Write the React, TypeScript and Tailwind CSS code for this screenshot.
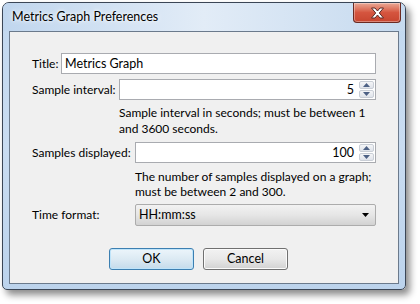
import React from "react";

const font = { fontFamily: '"Segoe UI", Lato, "Noto Sans", Arial, sans-serif' };

function Spinner() {
  return (
    <div className="flex h-full w-[16px] flex-col gap-[1px] py-[1px] pr-[1px]">
      {["up", "down"].map((d) => (
        <div
          key={d}
          className="flex flex-1 items-center justify-center rounded-[2px] border border-[#c9ced6] bg-gradient-to-b from-[#f4f5f7] to-[#dfe3ea]"
        >
          <svg width="7" height="4" viewBox="0 0 7 4">
            {d === "up" ? (
              <polygon points="0,4 7,4 3.5,0" fill="#4d6185" />
            ) : (
              <polygon points="0,0 7,0 3.5,4" fill="#4d6185" />
            )}
          </svg>
        </div>
      ))}
    </div>
  );
}

function NumberField({ value }: { value: string }) {
  return (
    <div className="flex h-[21px] flex-1 items-stretch border border-[#a9abb0] bg-white">
      <div className="flex flex-1 items-center justify-end pr-[5px] text-[12.5px] text-black">{value}</div>
      <Spinner />
    </div>
  );
}

export default function App() {
  return (
    <div className="h-[304px] w-[420px] overflow-hidden bg-white pl-[2px] pt-[2px]" style={font}>
      <div className="flex h-[288px] w-[404px] flex-col rounded-t-[7px] rounded-b-[5px] border border-[#3b4656] bg-gradient-to-b from-[#c2d8ef] via-[#c9dcf1] to-[#bcd3ec] shadow-[4px_5px_7px_rgba(0,0,0,0.45)]">
        {/* title bar */}
        <div className="relative flex h-[28px] items-start justify-between rounded-t-[6px] bg-gradient-to-r from-[#c0d6ee] via-[#e2ecf7] to-[#c6daef]">
          <span className="whitespace-nowrap pl-[9px] pt-[6px] text-[12.5px] leading-[16px] text-black [text-shadow:0_0_6px_#ffffff,0_0_3px_#ffffff]">
            Metrics Graph Preferences
          </span>
          <div className="mr-[4px] flex h-[20px] w-[48px] items-center justify-center rounded-b-[4px] border border-t-0 border-[#6a2a22] bg-gradient-to-b from-[#e9a895] via-[#d5553f] to-[#c7452f] shadow-[inset_0_0_0_1px_rgba(255,255,255,0.35)]">
            <svg width="15" height="12" viewBox="0 0 15 12">
              <path
                d="M1.5 1 L5 1 L7.5 4 L10 1 L13.5 1 L9.3 6 L13.5 11 L10 11 L7.5 8 L5 11 L1.5 11 L5.7 6 Z"
                fill="#ffffff"
                stroke="#5a2a26"
                strokeWidth="1"
                strokeLinejoin="round"
              />
            </svg>
          </div>
        </div>
        {/* client area */}
        <div className="mx-[6px] mb-[5px] flex flex-1 flex-col whitespace-nowrap border border-[#6b7a8c] bg-[#f0f0f0] pl-[22px] pr-[22px] text-[12px] leading-[16px] text-black">
          <div className="mt-[21px] flex h-[21px] items-center">
            <span className="w-[29px] shrink-0">Title:</span>
            <div className="flex h-[21px] flex-1 items-center border border-[#a9abb0] bg-white pl-[3px] text-[12.5px]">Metrics Graph</div>
          </div>
          <div className="mt-[5px] flex h-[21px] items-center">
            <span className="w-[87px] shrink-0">Sample interval:</span>
            <NumberField value="5" />
          </div>
          <div className="ml-[87px] mt-[5px]">
            Sample interval in seconds; must be between 1
            <br />
            and 3600 seconds.
          </div>
          <div className="mt-[5px] flex h-[21px] items-center">
            <span className="w-[103px] shrink-0">Samples displayed:</span>
            <NumberField value="100" />
          </div>
          <div className="ml-[103px] mt-[6px] leading-[15px]">
            The number of samples displayed on a graph;
            <br />
            must be between 2 and 300.
          </div>
          <div className="mt-[5px] flex h-[22px] items-center">
            <span className="w-[103px] shrink-0">Time format:</span>
            <div className="flex h-[22px] flex-1 items-center justify-between rounded-[2px] border border-[#acacac] bg-gradient-to-b from-[#f2f2f2] via-[#e6e6e6] to-[#d2d2d2] pl-[3px] pr-[6px] text-[12.5px]">
              <span>HH:mm:ss</span>
              <svg width="7" height="4" viewBox="0 0 7 4">
                <polygon points="0,0 7,0 3.5,4" fill="#000" />
              </svg>
            </div>
          </div>
          <div className="mt-[22px] flex justify-center gap-[9px] pr-[11px] text-[12.5px]">
            <button className="flex h-[22px] w-[85px] items-center justify-center rounded-[3px] border border-[#3c7fb1] bg-gradient-to-b from-[#ecf5fb] via-[#dceaf3] to-[#c4dbeb] shadow-[inset_0_0_0_1px_#bfe4fa]">
              OK
            </button>
            <button className="flex h-[22px] w-[85px] items-center justify-center rounded-[3px] border border-[#707070] bg-gradient-to-b from-[#f2f2f2] via-[#e8e8e8] to-[#d2d2d2] shadow-[inset_0_0_0_1px_#fbfbfb]">
              Cancel
            </button>
          </div>
        </div>
      </div>
    </div>
  );
}
